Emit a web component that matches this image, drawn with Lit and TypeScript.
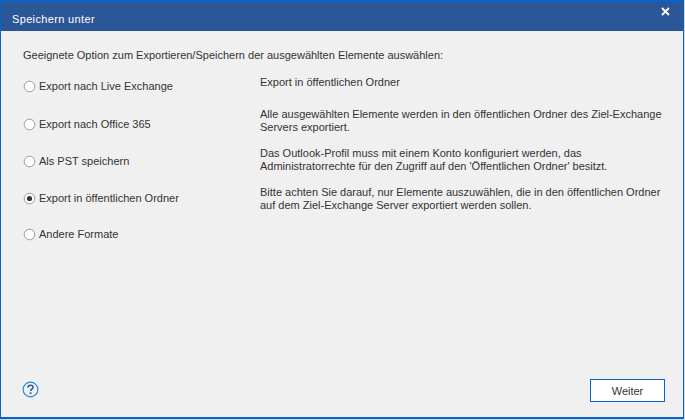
import { LitElement, html, css, svg } from "lit";
import { customElement } from "lit/decorators.js";

const options = [
  { label: "Export nach Live Exchange", lines: ["Export in öffentlichen Ordner"], cls: "r1" },
  { label: "Export nach Office 365", lines: ["Alle ausgewählten Elemente werden in den öffentlichen Ordner des Ziel-Exchange", "Servers exportiert."], cls: "r2" },
  { label: "Als PST speichern", lines: ["Das Outlook-Profil muss mit einem Konto konfiguriert werden, das", "Administratorrechte für den Zugriff auf den 'Öffentlichen Ordner' besitzt."], cls: "r3" },
  { label: "Export in öffentlichen Ordner", lines: ["Bitte achten Sie darauf, nur Elemente auszuwählen, die in den öffentlichen Ordner", "auf dem Ziel-Exchange Server exportiert werden sollen."], cls: "r4", checked: true },
  { label: "Andere Formate", lines: [], cls: "r5" },
];

@customElement("app-root")
export class AppRoot extends LitElement {
  static styles = css`
    :host { display: block; width: 685px; height: 420px; background: #c9d6e6; overflow: hidden; }
    .win {
      box-sizing: border-box; width: 684px; height: 419px;
      border: 1px solid #0a63c9; border-top-width: 2px; border-bottom-width: 2px; background: #f0f0f0;
      display: flex; flex-direction: column;
      font: 11px "Liberation Sans", Arial, sans-serif; color: #333;
    }
    .title {
      flex: none; height: 29px; background: #2b5797; color: #fff;
      display: flex; align-items: center; justify-content: space-between;
      padding: 0 13px 0 11px; font-size: 11px; letter-spacing: 0.35px;
    }
    .title span { margin-top: 5px; }
    .title svg { display: block; margin-top: -10px; }
    .body { flex: 1; display: flex; flex-direction: column; padding: 17px 18px 0 22px; }
    .intro { height: 15px; line-height: 15px; white-space: nowrap; }
    .rows { margin-top: 16px; display: flex; flex-direction: column; }
    .row { display: grid; grid-template-columns: 237px 1fr; }
    .r1 { height: 38px; } .r2 { height: 37px; } .r3 { height: 37px; } .r4 { height: 36px; } .r5 { height: 20px; }
    .opt { display: flex; align-items: flex-start; gap: 3px; height: 15px; line-height: 15px; white-space: nowrap; }
    .opt svg { flex: none; margin-top: 1px; }
    .desc { line-height: 13px; white-space: nowrap; }
    .r1 .desc { margin-top: -3px; }
    .r2 .desc { margin-top: -9px; }
    .r3 .desc { margin-top: -7px; }
    .r4 .desc { margin-top: -5px; }
    .foot { margin-top: auto; display: flex; justify-content: space-between; align-items: center; padding-bottom: 15px; }
    .help { display: block; margin: -2px 0 0 -1px; }
    button {
      box-sizing: border-box; width: 75px; height: 23px; background: #fff;
      border: 1px solid #0a63c9; padding: 0; color: #333;
      font: 11px "Liberation Sans", Arial, sans-serif;
    }
  `;

  radio(checked?: boolean) {
    return html`<svg width="13" height="13" viewBox="0 0 13 13">
      <circle cx="6.5" cy="6.5" r="5.3" fill="#fff" stroke="#999"></circle>
      ${checked ? svg`<circle cx="6.5" cy="6.5" r="2.6" fill="#333"></circle>` : ""}
    </svg>`;
  }

  render() {
    return html`<div class="win">
      <div class="title">
        <span>Speichern unter</span>
        <svg width="9" height="9" viewBox="0 0 9 9"><path d="M1 1L8 8M8 1L1 8" stroke="#fff" stroke-width="1.8" fill="none"></path></svg>
      </div>
      <div class="body">
        <div class="intro">Geeignete Option zum Exportieren/Speichern der ausgewählten Elemente auswählen:</div>
        <div class="rows">
          ${options.map(o => html`<div class="row ${o.cls}">
            <div class="opt">${this.radio(o.checked)}<span>${o.label}</span></div>
            <div class="desc">${o.lines.map(l => html`<div>${l}</div>`)}</div>
          </div>`)}
        </div>
        <div class="foot">
          <svg class="help" width="17" height="17" viewBox="0 0 17 17">
            <circle cx="8.5" cy="8.5" r="7.4" fill="none" stroke="#1e82e6" stroke-width="1.1"></circle>
            <path d="M6 6.6C6 5 7.2 4.2 8.5 4.2C9.9 4.2 11 5 11 6.3C11 8 8.6 8.2 8.6 10" fill="none" stroke="#2b5797" stroke-width="1.5"></path>
            <rect x="7.7" y="11.3" width="1.8" height="1.8" fill="#2b5797"></rect>
          </svg>
          <button>Weiter</button>
        </div>
      </div>
    </div>`;
  }
}
